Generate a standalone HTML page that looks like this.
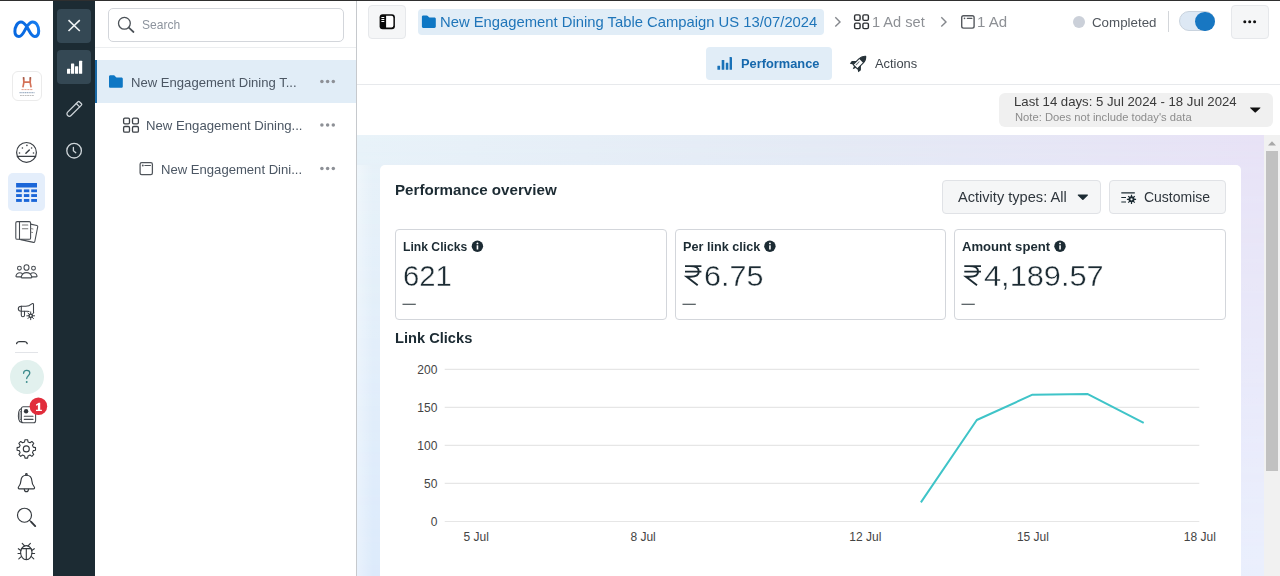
<!DOCTYPE html>
<html lang="en">
<head>
<meta charset="utf-8">
<title>Ads Manager</title>
<style>
*{box-sizing:border-box;margin:0;padding:0}
html,body{width:1280px;height:576px;overflow:hidden;background:#fff;font-family:"Liberation Sans",sans-serif}
body{position:relative}
.a{position:absolute}
.t{position:absolute;white-space:pre;line-height:1;transform-origin:0 0}
svg{position:absolute;overflow:visible}
.num{-webkit-text-stroke:.4px #fff}
</style>
</head>
<body>
<!-- main backgrounds -->
<div class="a" style="left:357px;top:134.5px;width:907px;height:442px;background:linear-gradient(90deg,#e9f3f9 0%,#e5ebf5 50%,#e8e2f6 100%)"></div>
<div class="a" style="left:357px;top:134.5px;width:907px;height:442px;background:linear-gradient(90deg,#dceafb 0%,#e2ebfb 50%,#eaeffd 100%);-webkit-mask-image:linear-gradient(180deg,rgba(0,0,0,0) 0%,rgba(0,0,0,.15) 8%,#000 100%);mask-image:linear-gradient(180deg,rgba(0,0,0,0) 0%,rgba(0,0,0,.15) 8%,#000 100%)"></div>
<div class="a" style="left:357px;top:164.5px;width:23px;height:412px;background:linear-gradient(90deg,rgba(255,255,255,.35) 0%,rgba(255,255,255,0) 70%)"></div>
<div class="a" style="left:357px;top:84px;width:923px;height:1px;background:#e7e9ec"></div>
<!-- scrollbar -->
<div class="a" style="left:1264px;top:134.5px;width:16px;height:442px;background:#f1f1f1"></div>
<div class="a" style="left:1266px;top:151px;width:12px;height:320px;background:#c1c1c1"></div>
<svg style="left:1268px;top:140.5px" width="8" height="5" viewBox="0 0 8 5"><path d="M0 4.6 L4 0.2 L8 4.6Z" fill="#a8a8a8"/></svg>
<!-- card -->
<div class="a" style="left:379.5px;top:164.5px;width:861.5px;height:420px;background:#fff;border-radius:5px"></div>
<!-- metric boxes -->
<div class="a" style="left:395px;top:229px;width:271.5px;height:91px;border:1px solid #d3d6db;border-radius:4px"></div>
<div class="a" style="left:675px;top:229px;width:271px;height:91px;border:1px solid #d3d6db;border-radius:4px"></div>
<div class="a" style="left:954px;top:229px;width:272px;height:91px;border:1px solid #d3d6db;border-radius:4px"></div>
<!-- buttons in card -->
<div class="a" style="left:942px;top:180px;width:159px;height:33.5px;background:#f5f6f7;border:1px solid #e0e2e6;border-radius:4px"></div>
<div class="a" style="left:1109px;top:180px;width:117px;height:33.5px;background:#f5f6f7;border:1px solid #e0e2e6;border-radius:4px"></div>
<!-- date box -->
<div class="a" style="left:999px;top:93px;width:273.5px;height:33.5px;background:#f0f0f0;border-radius:6px"></div>
<!-- header: toggle button, breadcrumb chip, tab chip, more btn -->
<div class="a" style="left:368px;top:5px;width:38px;height:34px;background:#f5f6f7;border:1px solid #e6e8eb;border-radius:4px"></div>
<div class="a" style="left:417.5px;top:9px;width:406px;height:26px;background:#e1edf7;border-radius:4px"></div>
<div class="a" style="left:706px;top:46.5px;width:126px;height:33.5px;background:#e1edf7;border-radius:4px"></div>
<div class="a" style="left:1231px;top:5px;width:37.5px;height:34px;background:#f5f6f7;border:1px solid #e6e8eb;border-radius:4px"></div>
<div class="a" style="left:1168px;top:11px;width:1px;height:21px;background:#d3d6da"></div>
<!-- status dot + toggle -->
<div class="a" style="left:1072.75px;top:16px;width:12px;height:12px;border-radius:50%;background:#cbd0d9"></div>
<div class="a" style="left:1179px;top:11.3px;width:35.5px;height:20px;border-radius:10px;background:#dde8f4;border:1px solid #c9d3de"></div>
<div class="a" style="left:1195.3px;top:11.9px;width:19.4px;height:19.4px;border-radius:50%;background:#1877c2"></div>
<!-- tree panel -->
<div class="a" style="left:95px;top:47px;width:261px;height:1px;background:#eceef0"></div>
<div class="a" style="left:95px;top:60px;width:261px;height:43px;background:#e1edf7"></div>
<div class="a" style="left:95px;top:60px;width:2px;height:43px;background:#1b6aa6"></div>
<div class="a" style="left:356px;top:1px;width:1px;height:575px;background:#c6c9cd"></div>
<div class="a" style="left:107.5px;top:8px;width:236.5px;height:33.5px;border:1px solid #d3d6db;border-radius:5px;background:#fff"></div>
<!-- dark rail -->
<div class="a" style="left:53px;top:0;width:42px;height:576px;background:#1c2b33"></div>
<div class="a" style="left:57px;top:8.5px;width:34px;height:34px;background:#344854;border-radius:4px"></div>
<div class="a" style="left:57px;top:50px;width:34px;height:34px;background:#344854;border-radius:4px"></div>
<!-- left nav -->
<div class="a" style="left:8px;top:173px;width:37px;height:38px;background:#e4eefb;border-radius:5px"></div>
<div class="a" style="left:9.7px;top:360px;width:34px;height:34px;background:#e2f1ee;border-radius:50%"></div>
<div class="a" style="left:15px;top:351.5px;width:23px;height:1.5px;background:#e2e4e8"></div>
<div class="a" style="left:11.5px;top:71px;width:30.5px;height:30px;border:1px solid #ebebeb;border-radius:6px;background:#fff"></div>
<!-- top strip -->
<div class="a" style="left:0;top:0;width:1280px;height:1px;background:#2f2f2f"></div>
<!-- chart -->
<svg style="left:0;top:0" width="1280" height="576" viewBox="0 0 1280 576">
<g stroke="#e6e6e6" stroke-width="1.2">
<line x1="444.7" y1="369.3" x2="1199.3" y2="369.3"/>
<line x1="444.7" y1="407.3" x2="1199.3" y2="407.3"/>
<line x1="444.7" y1="445.3" x2="1199.3" y2="445.3"/>
<line x1="444.7" y1="483.4" x2="1199.3" y2="483.4"/>
<line x1="444.7" y1="521.5" x2="1199.3" y2="521.5"/>
</g>
<polyline points="920.9,502.4 976.8,420 1032.5,394.7 1087.8,394.1 1143.7,422.8" fill="none" stroke="#3fc4c8" stroke-width="2" stroke-linejoin="round"/>
</svg>

<!-- icons -->
<svg style="left:0;top:0" width="1280" height="576" viewBox="0 0 1280 576" fill="none" stroke-linecap="round" stroke-linejoin="round">
<!-- meta logo -->
<defs><linearGradient id="mg" x1="13" y1="38" x2="40" y2="20" gradientUnits="userSpaceOnUse"><stop offset="0" stop-color="#0668e1"/><stop offset=".5" stop-color="#0a6be2"/><stop offset="1" stop-color="#1a83f5"/></linearGradient></defs>
<path d="M14.9 31.6c0-5 2.7-9.7 6-9.7 2.3 0 4 1.700 6 4.900 2.200 3.500 4.300 9.700 7.700 9.700 2.500 0 4.100-2.200 4.100-5.600 0-5-2.700-9-6-9-2.100 0-3.800 1.600-5.800 4.600-2.300 3.500-4.200 10-7.900 10-2.500 0-4.100-1.900-4.100-4.900z" stroke="url(#mg)" stroke-width="3"/>
<!-- account logo -->
<g stroke="none">
<path d="M22.700 77.200l1.600-.3.500 4.400h4.400l.5-4.400 1.600.3-.3 5.200.9 4.900-1.600.2-.9-4.600h-4.800l-.9 4.600-1.600-.2.900-4.900z" fill="#cf6245" opacity=".9"/>
<path d="M22.900 77.100l1.300-.2.300 2.600h-1.500zM29.700 76.900l1.300.2-.1 2.400h-1.500z" fill="#7a4a3f" opacity=".55"/>
</g>
<g fill="none" stroke-linecap="butt">
<path d="M21.500 89.600h11.500" stroke="#e3a08e" stroke-width="1" stroke-dasharray="2.200 .7"/>
<path d="M19.500 92.700h15" stroke="#9fb0c4" stroke-width="1.200" stroke-dasharray="1.300 .5"/>
<path d="M20 95.500h14" stroke="#b5b5b5" stroke-width=".9" stroke-dasharray="1.800 .6"/>
</g>
<!-- gauge -->
<g stroke="#3a3f45" stroke-width="1.200">
<circle cx="26.500" cy="152.400" r="9.900"/>
<path d="M17.500 156.400h18"/>
<path d="M25.900 153.300l3.400-3.300" stroke-width="1.450"/>
</g>
<g fill="#3a3f45"><circle cx="26.900" cy="145.400" r=".8"/><circle cx="22.400" cy="148" r=".8"/><circle cx="31.600" cy="148" r=".8"/><circle cx="19.500" cy="153" r=".8"/><circle cx="33.500" cy="153" r=".8"/></g>
<!-- table (selected) -->
<g fill="#1b66d8" stroke="none">
<rect x="16.100" y="183" width="20.900" height="4.500"/>
<rect x="16.100" y="189.400" width="5.700" height="2.800"/><rect x="23.900" y="189.400" width="5.400" height="2.800"/><rect x="31.200" y="189.400" width="5.800" height="2.800"/>
<rect x="16.100" y="194.100" width="5.700" height="2.900"/><rect x="23.900" y="194.100" width="5.400" height="2.900"/><rect x="31.200" y="194.100" width="5.800" height="2.900"/>
<rect x="16.100" y="199" width="5.700" height="2.900"/><rect x="23.900" y="199" width="5.400" height="2.900"/><rect x="31.200" y="199" width="5.800" height="2.900"/>
</g>
<!-- docs -->
<g stroke="#474c52" stroke-width="1.080">
<rect x="15.800" y="221.600" width="14.800" height="17.700" rx="1.400"/>
<path d="M19.500 221.600v17.700"/>
<path d="M22.400 225h5.400M22.400 228.700h5.400" stroke="#777"/>
<path d="M30.600 224.100l6.300 1.400c.6.100 1 .7.800 1.300l-2.900 14.700c-.1.600-.7 1-1.300.9l-12.800-2.800"/>
<path d="M31.200 228.600l1.800.4M31.200 232.200l1.400.3" stroke="#888" stroke-width="1"/>
</g>
<!-- people -->
<g stroke="#474c52" stroke-width="1.080">
<ellipse cx="26.500" cy="267.500" rx="2.500" ry="2.800"/>
<circle cx="19.400" cy="268.200" r="1.900"/>
<circle cx="33.500" cy="268.200" r="1.900"/>
<path d="M21.900 277.900c-.5 0-.8-.4-.7-.9.600-2.800 2.600-4.400 5.300-4.400s4.700 1.600 5.300 4.400c.1.500-.2.900-.7.900z"/>
<path d="M21.300 276.900h-4.500c-.6 0-.9-.4-.8-.9.500-2.100 1.900-3.200 3.800-3.200 1 0 1.900.3 2.500.9"/>
<path d="M31.700 276.900h4.500c.6 0 .9-.4.800-.9-.5-2.100-1.900-3.200-3.800-3.200-1 0-1.900.3-2.500.9"/>
</g>
<!-- megaphone -->
<g stroke="#3d4248" stroke-width="1.080">
<path d="M21.300 306.300h4.500c2.300 0 4.300-1 6-2.500.7-.6 1.700-.2 1.700.8v8.200"/>
<path d="M21.300 306.300c-1.700 0-3 1.100-3 2.500s1.300 2.500 3 2.500h6c.6 0 1.200.1 1.700.3"/>
<path d="M21.300 306.300v8.900c0 .9.700 1.600 1.600 1.600s1.600-.7 1.600-1.600v-3.900"/>
<path d="M30.700 311.900v7.800M26.800 315.800h7.800M27.900 313l5.600 5.600M33.500 313l-5.600 5.600" stroke-width="1"/>
</g>
<circle cx="30.700" cy="315.800" r="2.300" fill="#33383d"/><circle cx="30.700" cy="315.800" r="1" fill="#fff"/>
<!-- partial icon arc -->
<path d="M16.600 343.600c.3-1.400 1.500-2 3-2h4.600c1.500 0 2.700.6 3 2" stroke="#33383d" stroke-width="1.300"/>
<!-- help ? -->
<path d="M23.600 373.300c0-1.900 1.300-3 3.100-3s3.100 1.100 3.100 2.800c0 2.600-3.100 2.700-3.100 5.500" stroke="#3c8b8c" stroke-width="1.300"/>
<circle cx="26.700" cy="382" r=".95" fill="#3c8b8c"/>
<!-- news -->
<g stroke="#474c52" stroke-width="1.080">
<rect x="21.400" y="406.800" width="14.200" height="16" rx="2"/>
<path d="M21.400 408.500c-1.600.6-2.400 1.800-2.700 3.500-.4 2.400-.4 4.800 0 7.200.3 1.700 1.400 3 3 3.400"/>
<path d="M21.400 410.500c-1 .8-1.300 1.700-1.400 2.700-.2 1.800-.2 3.600.1 5.400.2 1 .6 1.700 1.300 2.200" stroke-width=".8"/>
<path d="M24.300 416.300h8.700M24.300 419.400h8.700"/>
</g>
<circle cx="26.100" cy="411.300" r="2.200" fill="#33383d"/>
<circle cx="38.400" cy="406.300" r="8.800" fill="#e12d3c"/>
<path d="M36 404.600l2.700-1.900h1.500v7h1.700v1.300h-5.900v-1.300h1.900v-4.800l-1.900.9z" fill="#fff"/>
<!-- gear -->
<g stroke="#33383d" stroke-width="1.100">
<path d="M24.56 441.91 L24.99 439.69 L27.61 439.69 L28.04 441.91 L30.01 442.73 L31.88 441.46 L33.74 443.32 L32.47 445.19 L33.29 447.16 L35.51 447.59 L35.51 450.21 L33.29 450.64 L32.47 452.61 L33.74 454.48 L31.88 456.34 L30.01 455.07 L28.04 455.89 L27.61 458.11 L24.99 458.11 L24.56 455.89 L22.59 455.07 L20.72 456.34 L18.86 454.48 L20.13 452.61 L19.31 450.64 L17.09 450.21 L17.09 447.59 L19.31 447.16 L20.13 445.19 L18.86 443.32 L20.72 441.46 L22.59 442.73Z"/>
<circle cx="26.300" cy="448.900" r="3"/>
</g>
<!-- bell -->
<g stroke="#33383d" stroke-width="1.150">
<path d="M26.400 475.200c-3.300 0-5.300 2.500-5.500 5.700-.1 2.300-.9 4.300-2.400 6.100-.5.700-.2 1.900.8 1.900h14.200c1 0 1.300-1.200.8-1.900-1.500-1.800-2.300-3.800-2.400-6.100-.2-3.200-2.200-5.700-5.500-5.700z"/>
<circle cx="26.400" cy="474.400" r=".8"/>
<path d="M24.300 489.300c.2 1.400 1 2.400 2.100 2.400s1.900-1 2.100-2.400"/>
</g>
<!-- search -->
<g stroke="#33383d">
<circle cx="24.500" cy="515.200" r="7" stroke-width="1.150"/>
<path d="M29.600 520.300l1.800 1.800" stroke-width="1.150"/>
<path d="M31.400 522.100l3.800 4" stroke-width="1.900"/>
</g>
<!-- bug -->
<g stroke="#33383d" stroke-width="1.100">
<ellipse cx="26.300" cy="552.600" rx="5.700" ry="7"/>
<path d="M21.400 548.600h9.800M26.300 548.600v10.800"/>
<path d="M24.600 545.900l-2.400-2.600M28 545.900l2.400-2.600"/>
<path d="M20.900 550.500l-2.600-1.800M31.700 550.500l2.600-1.800M20.600 553.500h-2.600M32 553.500h2.600M21.200 556.700l-2.400 2.100M31.400 556.700l2.400 2.100"/>
</g>
</svg>

<svg style="left:0;top:0" width="1280" height="576" viewBox="0 0 1280 576" fill="none" stroke-linecap="round" stroke-linejoin="round">
<path d="M68.500 20.200l11.300 10.800M79.800 20.200l-11.300 10.800" stroke="#eef2f4" stroke-width="1.600" stroke-linecap="butt"/>
<g fill="#fff" stroke="none">
<rect x="67" y="68.800" width="3.200" height="5" rx=".5"/>
<rect x="71" y="63.400" width="3.200" height="10.400" rx=".5"/>
<rect x="75" y="66.200" width="3.200" height="7.600" rx=".5"/>
<rect x="79" y="60.800" width="3.200" height="13" rx=".5"/>
</g>
<g transform="translate(74.450 108.700) rotate(-45)" stroke="#ccd3d8" stroke-width="1.300">
<path d="M-7.200 -2.400H7.500a.9 .9 0 0 1 .9 .9V1.500a.9 .9 0 0 1 -.9 .9H-7.200a2.400 2.400 0 0 1 0 -4.800z"/>
<path d="M5 -2.400v4.800"/>
</g>
<g stroke="#cfd6da" stroke-width="1.300">
<circle cx="74.100" cy="150.700" r="7.300"/>
<path d="M73.400 147.400v3.300l2.400 2"/>
</g>
</svg>

<svg style="left:0;top:0" width="1280" height="576" viewBox="0 0 1280 576" fill="none" stroke-linecap="round" stroke-linejoin="round">
<!-- search icon -->
<circle cx="124.400" cy="23.300" r="5.900" stroke="#4b5157" stroke-width="1.300"/>
<path d="M128.800 27.700l4.700 4.300" stroke="#4b5157" stroke-width="1.700"/>
<!-- folder row1 -->
<path d="M109 76.600c0-.7.600-1.300 1.300-1.300h3.500c.5 0 .9.200 1.200.6l.8 1.100c.2.300.5.400.8.400h4.900c.7 0 1.300.6 1.300 1.300v7.800c0 .7-.6 1.300-1.300 1.300h-11.200c-.7 0-1.300-.6-1.300-1.300z" fill="#0e77c4"/>
<!-- grid row2 -->
<g stroke="#3c4147" stroke-width="1.300">
<rect x="123.600" y="118.100" width="5.900" height="5.800" rx="1.300"/><rect x="132.500" y="118.100" width="5.900" height="5.800" rx="1.300"/>
<rect x="123.600" y="126.500" width="5.900" height="5.700" rx="1.300"/><rect x="132.500" y="126.500" width="5.900" height="5.700" rx="1.300"/>
</g>
<!-- ad row3 -->
<g stroke="#50555b" stroke-width="1.250">
<rect x="140.100" y="162.700" width="12.300" height="12" rx="1.600"/>
<path d="M144.800 165.500h5.700" stroke-width="1"/>
</g>
<circle cx="142.800" cy="165.500" r=".9" fill="#50555b"/>
<!-- row dots -->
<g fill="#8d9096">
<circle cx="321.900" cy="81.500" r="1.750"/><circle cx="327.600" cy="81.500" r="1.750"/><circle cx="333.300" cy="81.500" r="1.750"/>
<circle cx="321.900" cy="124.900" r="1.750"/><circle cx="327.600" cy="124.900" r="1.750"/><circle cx="333.300" cy="124.900" r="1.750"/>
<circle cx="321.900" cy="168.500" r="1.750"/><circle cx="327.600" cy="168.500" r="1.750"/><circle cx="333.300" cy="168.500" r="1.750"/>
</g>
</svg>

<svg style="left:0;top:0" width="1280" height="576" viewBox="0 0 1280 576" fill="none" stroke-linecap="round" stroke-linejoin="round">
<!-- sidebar toggle icon -->
<rect x="379.600" y="14.150" width="15.300" height="15.150" rx="3" fill="#0a0a0a"/>
<path d="M386.100 15.800h5.300a2 2 0 0 1 2 2v7.800a2 2 0 0 1 -2 2h-5.300z" fill="#fff"/>
<path d="M381.400 17.500h2.900M381.400 19.500h2.900M381.400 21.500h2.900" stroke="#fff" stroke-width="1" stroke-linecap="butt"/>
<!-- folder in chip -->
<path d="M421.900 16.700c0-.7.600-1.300 1.300-1.300h3.500c.5 0 .9.200 1.200.6l.8 1.100c.2.300.5.400.8.400h5c.7 0 1.300.6 1.300 1.300v7.800c0 .7-.6 1.300-1.300 1.300h-11.300c-.7 0-1.300-.6-1.300-1.300z" fill="#0e77c4"/>
<!-- chevrons -->
<path d="M835.300 17.300l4.700 4.600-4.700 4.600" stroke="#85888d" stroke-width="1.400" stroke-linejoin="miter" stroke-linecap="butt"/>
<path d="M941.300 17.300l4.700 4.600-4.700 4.600" stroke="#85888d" stroke-width="1.400" stroke-linejoin="miter" stroke-linecap="butt"/>
<!-- grid -->
<g stroke="#2c2f33" stroke-width="1.400">
<rect x="854.600" y="14.850" width="5.500" height="5.500" rx="1.300"/><rect x="862.900" y="14.850" width="5.500" height="5.500" rx="1.300"/>
<rect x="854.600" y="23.100" width="5.500" height="5.500" rx="1.300"/><rect x="862.900" y="23.100" width="5.500" height="5.500" rx="1.300"/>
</g>
<!-- ad icon -->
<g stroke="#55595e" stroke-width="1.400">
<rect x="961.700" y="15.700" width="12.400" height="12.400" rx="1.800"/>
<path d="M967.300 18.400h4.600" stroke-width="1.100"/>
</g>
<circle cx="964.500" cy="18.400" r=".8" fill="#55595e"/>
<!-- more dots -->
<g fill="#111"><circle cx="1244.800" cy="21.700" r="1.500"/><circle cx="1249.700" cy="21.700" r="1.500"/><circle cx="1254.600" cy="21.700" r="1.500"/></g>
<!-- perf icon -->
<g fill="#1a72b8">
<rect x="717.400" y="65.700" width="2.700" height="4.100" rx=".4"/>
<rect x="721.700" y="60.100" width="2.600" height="9.700" rx=".4"/>
<rect x="725.800" y="62.700" width="2.500" height="7.100" rx=".4"/>
<rect x="729.600" y="57" width="2.400" height="12.800" rx=".4"/>
</g>
<!-- rocket -->
<g transform="translate(858.500 63.500) rotate(45)">
<path d="M0 -10.200c2 1.700 3 4 3 6.700V4.600H-3V-3.500c0-2.700 1-5 3-6.700z" fill="#fff" stroke="#263238" stroke-width="1.100"/>
<path d="M0 -10.200c2 1.700 3 4 3 6.400H-3c0-2.400 1-4.700 3-6.400z" fill="#263238"/>
<path d="M-3 -.5l-3.200 3.300c-.3.300-.4.700-.3 1.100l.6 2.400 2.900-1.900z" fill="#263238"/>
<path d="M3 -.5l3.200 3.300c.3.300.4.700.3 1.100l-.6 2.400-2.900-1.900z" fill="#263238"/>
<path d="M-1.500 4.600h3l-1.500 3.600z" fill="#263238"/>
<path d="M-.8 -1.700v4.300" stroke="#6b767c" stroke-width="1"/>
</g>
<!-- date arrow -->
<path d="M1250.300 107.400h9.900c.3 0 .4.300.2.500l-4.800 4.700c-.2.200-.5.200-.7 0l-4.800-4.700c-.2-.2-.1-.5.200-.5z" fill="#111"/>
</svg>

<svg style="left:0;top:0" width="1280" height="576" viewBox="0 0 1280 576" fill="none" stroke-linecap="round" stroke-linejoin="round">
<!-- activity arrow -->
<path d="M1078.300 194.400h9c.6 0 .9.700.5 1.100l-4.400 4.300c-.3.300-.8.300-1.100 0l-4.400-4.300c-.4-.4-.1-1.100.4-1.100z" fill="#1c2b33"/>
<!-- customise icon -->
<g stroke="#1c2b33" stroke-width="1.100" stroke-linecap="butt">
<path d="M1121.300 192.900h13.500M1121.300 197.500h4.700M1121.300 202h4.700"/>
<path d="M1131.500 194.700v9.200M1126.900 199.300h9.200M1128.250 196.050l6.500 6.500M1134.750 196.050l-6.500 6.500" stroke-width="1.200"/>
</g>
<circle cx="1131.500" cy="199.300" r="3" fill="#1c2b33"/><circle cx="1131.500" cy="199.300" r="1.150" fill="#fff"/>
<!-- info icons -->
<g fill="#1c2b33"><circle cx="477.400" cy="246.300" r="5.700"/><circle cx="769.900" cy="246.300" r="5.700"/><circle cx="1060" cy="246.300" r="5.700"/></g>
<g fill="#fff">
<rect x="476.650" y="245.300" width="1.600" height="4.200"/><circle cx="477.450" cy="243.400" r=".95"/>
<rect x="769.150" y="245.300" width="1.600" height="4.200"/><circle cx="769.950" cy="243.400" r=".95"/>
<rect x="1059.250" y="245.300" width="1.600" height="4.200"/><circle cx="1060.050" cy="243.400" r=".95"/>
</g>
<!-- rupee glyphs -->
<g stroke="#1c2b33" stroke-width="1.9" stroke-linecap="butt" stroke-linejoin="miter" fill="none">
<path transform="translate(685 265.2)" d="M0 .9H16.4M0 6.4H16.4M3 .9h2c5.500 0 8.800 1.900 8.800 5.400 0 3.600-3.300 5.300-8.300 5.300H1.600L12.700 20"/>
<path transform="translate(964.3 265.2)" d="M0 .9H16.700M0 6.400H16.700M3 .9h2c5.500 0 8.800 1.900 8.800 5.400 0 3.600-3.300 5.300-8.300 5.300H1.600L12.700 20"/>
</g>
<!-- dashes -->
<g stroke="#2a343a" stroke-width="1.1" stroke-linecap="butt">
<path d="M402.500 304.300h13.300M682.500 304.300h13.300M961.500 304.300h13.300"/>
</g>
</svg>

<!-- texts -->
<span class="t" style="font-size:13px;color:#8d949e;top:18px;left:142.00px;transform:scaleX(0.9277);">Search</span>
<span class="t" style="font-size:13px;color:#4c5764;top:76px;left:130.99px;transform:scaleX(1.0068);">New Engagement Dining T...</span>
<span class="t" style="font-size:13px;color:#4c5764;top:119px;left:145.99px;transform:scaleX(1.0122);">New Engagement Dining...</span>
<span class="t" style="font-size:13px;color:#4c5764;top:163px;left:160.99px;transform:scaleX(1.0067);">New Engagement Dini...</span>
<span class="t" style="font-size:14.5px;color:#1f75b9;top:15px;left:440.48px;transform:scaleX(1.0205);">New Engagement Dining Table Campaign US 13/07/2024</span>
<span class="t" style="font-size:14px;color:#8d9095;top:15px;left:871.86px;transform:scaleX(1.0421);">1 Ad set</span>
<span class="t" style="font-size:14px;color:#8d9095;top:15px;left:977.43px;transform:scaleX(1.0735);">1 Ad</span>
<span class="t" style="font-size:13.5px;color:#50565d;top:16px;left:1092.30px;transform:scaleX(0.9872);">Completed</span>
<span class="t" style="font-size:12.5px;color:#1668ac;top:58px;font-weight:700;left:741.00px;transform:scaleX(1.0265);">Performance</span>
<span class="t" style="font-size:13px;color:#3f464d;top:57px;left:875.30px;transform:scaleX(0.9900);">Actions</span>
<span class="t" style="font-size:12.4px;color:#3a3a3a;top:96px;left:1013.84px;transform:scaleX(1.0632);">Last 14 days: 5 Jul 2024 - 18 Jul 2024</span>
<span class="t" style="font-size:10px;color:#8c8c8c;top:113px;left:1014.90px;transform:scaleX(1.1209);">Note: Does not include today's data</span>
<span class="t" style="font-size:14px;color:#1c2b33;top:183px;font-weight:700;left:395.20px;transform:scaleX(1.0822);">Performance overview</span>
<span class="t" style="font-size:14px;color:#2f363d;top:190px;left:958.25px;transform:scaleX(1.0423);">Activity types: All</span>
<span class="t" style="font-size:14px;color:#2f363d;top:190px;left:1143.75px;transform:scaleX(0.9986);">Customise</span>
<span class="t" style="font-size:12.2px;color:#1c2b33;top:241px;font-weight:700;left:402.60px;transform:scaleX(0.9974);">Link Clicks</span>
<span class="t" style="font-size:12.2px;color:#1c2b33;top:241px;font-weight:700;left:682.50px;transform:scaleX(1.0369);">Per link click</span>
<span class="t" style="font-size:12.2px;color:#1c2b33;top:241px;font-weight:700;left:962.00px;transform:scaleX(1.0750);">Amount spent</span>
<span class="t num" style="font-size:30px;color:#1c2b33;top:261px;left:402.52px;transform:scaleX(0.9758);">621</span>
<span class="t num" style="font-size:30px;color:#1c2b33;top:261px;left:704.18px;transform:scaleX(1.0176);">6.75</span>
<span class="t num" style="font-size:30px;color:#1c2b33;top:261px;left:984.40px;transform:scaleX(1.0242);">4,189.57</span>
<span class="t" style="font-size:14px;color:#1c2b33;top:331px;font-weight:700;left:395.00px;transform:scaleX(1.0454);">Link Clicks</span>
<span class="t" style="font-size:12px;color:#444;top:364px;left:417.35px;">200</span>
<span class="t" style="font-size:12px;color:#444;top:402px;left:417.35px;">150</span>
<span class="t" style="font-size:12px;color:#444;top:440px;left:417.35px;">100</span>
<span class="t" style="font-size:12px;color:#444;top:478px;left:424.03px;">50</span>
<span class="t" style="font-size:12px;color:#444;top:516px;left:430.70px;">0</span>
<span class="t" style="font-size:12px;color:#444;top:531px;left:463.46px;">5 Jul</span>
<span class="t" style="font-size:12px;color:#444;top:531px;left:630.41px;">8 Jul</span>
<span class="t" style="font-size:12px;color:#444;top:531px;left:849.32px;">12 Jul</span>
<span class="t" style="font-size:12px;color:#444;top:531px;left:1016.92px;">15 Jul</span>
<span class="t" style="font-size:12px;color:#444;top:531px;left:1183.82px;">18 Jul</span>
</body>
</html>
